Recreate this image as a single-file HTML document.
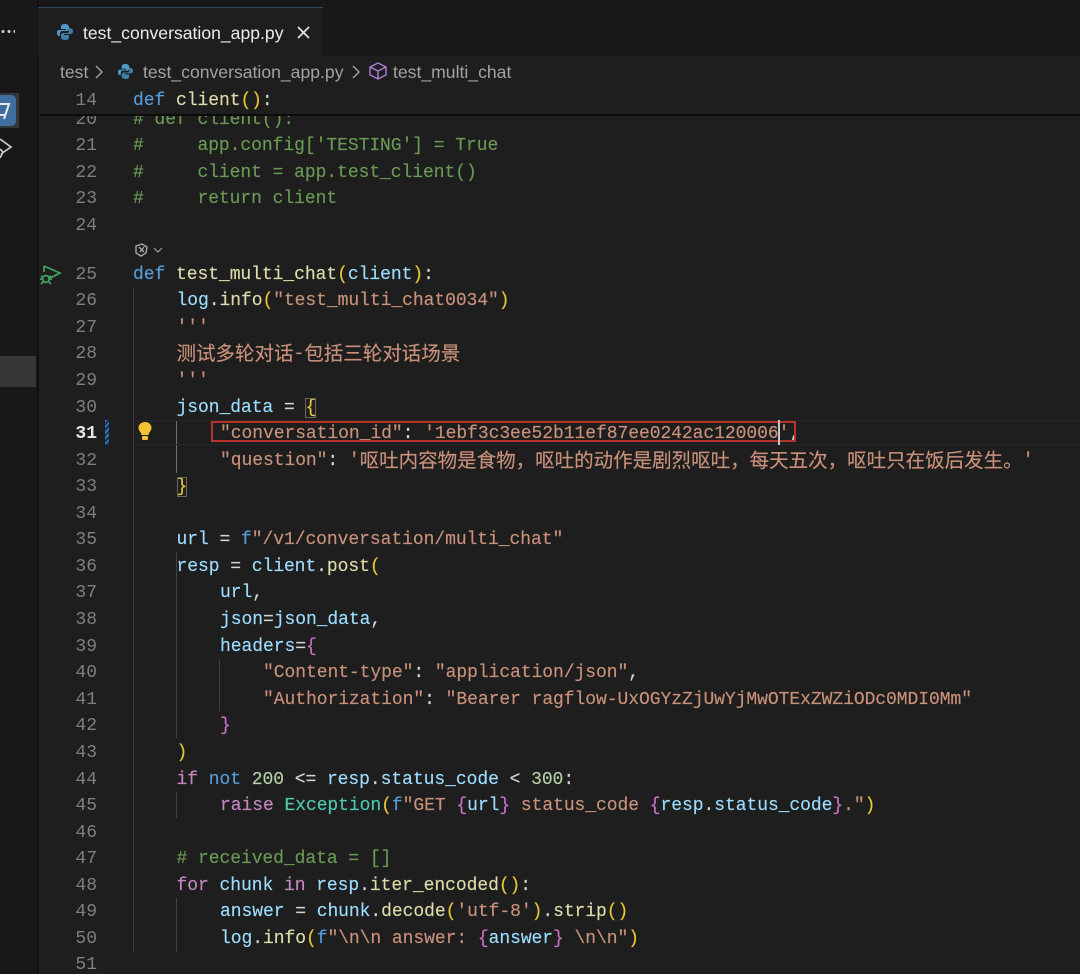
<!DOCTYPE html>
<html><head><meta charset="utf-8">
<style>
html,body{margin:0;padding:0;background:#1e1e1e}
#p{position:relative;width:1080px;height:974px;overflow:hidden;background:#1e1e1e;filter:blur(.35px)}
.a{position:absolute}
.l{position:absolute;margin-top:1px;white-space:pre;font:18px/26px "Liberation Mono","Noto Sans CJK SC",monospace;letter-spacing:-.06px;color:#d4d4d4;-webkit-text-stroke:.15px}
.n{position:absolute;margin-top:1px;width:39px;left:58px;text-align:right;font:18px/26px "Liberation Mono",monospace;color:#7f7f7f}
.u{font:17.6px/26px "Liberation Sans","Noto Sans CJK SC",sans-serif}
.c{font-family:"Noto Sans CJK SC",sans-serif;font-size:19.5px;line-height:0;letter-spacing:0;position:relative;top:1.5px}
.k{color:#569cd6}.f{color:#dcdcaa}.v{color:#9cdcfe}.s{color:#c9917a}.g{color:#6a9955}.y{color:#e6c635}.m{color:#c971c6}.p{color:#c586c0}.b{color:#b5cea8}.t{color:#4ec9b0}.w{color:#d4d4d4}
.i{position:absolute;width:1px;background:#404040}
</style></head><body>
<div id="p">
<div class="a" style="left:0;top:0;width:1080px;height:8px;background:#181818"></div>
<div class="a" style="left:0;top:0;width:37px;height:974px;background:#181818"></div>
<div class="a" style="left:37px;top:0;width:2px;height:974px;background:#111"></div>
<div class="a" style="left:39px;top:8px;width:1041px;height:48px;background:#181818"></div>
<div class="a" style="left:38px;top:7px;width:285px;height:49px;background:#1e1e1e;border-top:1px solid #2c4a63;box-sizing:border-box"></div>
<div class="a" style="left:0;top:356px;width:36px;height:31px;background:#37373a"></div>
<div class="a" style="left:0;top:93px;width:19px;height:35px;background:#33373c"></div>
<div class="a" style="left:0;top:95px;width:16px;height:31px;background:#3f6d9e;border-radius:0 5px 5px 0"></div>
<svg class="a" style="left:0;top:95px" width="16" height="30" fill="none" stroke="#e8e8e8" stroke-width="2"><path d="M0 9H9L4 24M0 20H5"/></svg>
<svg class="a" style="left:0;top:136px" width="14" height="24" fill="none" stroke="#cfcfcf" stroke-width="1.6"><path d="M0 3L11 11L1 18M0 13L3 16L0 22"/></svg>
<div class="a" style="left:0;top:30px;width:15px;height:3px;background:radial-gradient(circle,#ccc 1.4px,transparent 1.6px) 0 0/6px 3px"></div>
<svg class="a" style="left:57px;top:24px" width="16" height="16" viewBox="0 0 16 16"><path fill="#4d9ac9" d="M8 0C5 0 4 1 4 3V5H9V6H2C0 6 0 8 0 9C0 11 1 12 3 12V9C3 8 4 7 5 7H10C11 7 12 6 12 5V3C12 1 10 0 8 0Z"/><path fill="#3c7fa8" d="M12 4V7C12 8 11 9 10 9H6C5 9 4 10 4 11V13C4 15 6 16 8 16C11 16 12 15 12 13V11H7V10H13C15 10 16 9 16 7C16 5 14 4 12 4Z"/></svg>
<div class="a u" style="left:83px;top:20px;color:#ececec">test_conversation_app.py</div>
<svg class="a" style="left:296px;top:25px" width="15" height="15" fill="none" stroke="#e8e8e8" stroke-width="1.6"><path d="M2 2L13 13M13 2L2 13"/></svg>
<div class="a u" style="left:60px;top:59px;color:#a3a3a3">test</div>
<svg class="a" style="left:94px;top:65px" width="10" height="15" fill="none" stroke="#a3a3a3" stroke-width="1.4"><path d="M2 1L8 7L2 13"/></svg>
<svg class="a" style="left:118px;top:64px" width="15" height="15" viewBox="0 0 16 16"><path fill="#4d9ac9" d="M8 0C5 0 4 1 4 3V5H9V6H2C0 6 0 8 0 9C0 11 1 12 3 12V9C3 8 4 7 5 7H10C11 7 12 6 12 5V3C12 1 10 0 8 0Z"/><path fill="#3c7fa8" d="M12 4V7C12 8 11 9 10 9H6C5 9 4 10 4 11V13C4 15 6 16 8 16C11 16 12 15 12 13V11H7V10H13C15 10 16 9 16 7C16 5 14 4 12 4Z"/></svg>
<div class="a u" style="left:143px;top:59px;color:#a3a3a3">test_conversation_app.py</div>
<svg class="a" style="left:351px;top:65px" width="10" height="15" fill="none" stroke="#a3a3a3" stroke-width="1.4"><path d="M2 1L8 7L2 13"/></svg>
<svg class="a" style="left:369px;top:61px" width="18" height="20" fill="none" stroke="#b180d7" stroke-width="1.4"><path d="M9 2L17 6V14L9 18L1 14V6ZM1 6L9 10L17 6M9 10V18"/></svg>
<div class="a u" style="left:393px;top:59px;color:#a3a3a3">test_multi_chat</div>

<div class="l" style="left:133px;top:106px"><span class="g"># def client():</span></div>
<div class="n" style="top:106px">20</div>
<div class="a" style="left:39px;top:86px;width:1041px;height:28px;background:#1e1e1e"></div>
<div class="a" style="left:40px;top:114px;width:1040px;height:2px;background:#0a0a0a"></div>
<div class="n" style="top:87px">14</div>
<div class="l" style="left:133px;top:87px"><span class="k">def</span> <span class="f">client</span><span class="y">()</span><span class="w">:</span></div>

<div class="i" style="left:133px;top:288px;height:664px"></div>
<div class="i" style="left:176px;top:420px;height:53px;background:#707070"></div>
<div class="i" style="left:176px;top:552px;height:186px"></div>
<div class="i" style="left:176px;top:792px;height:26px"></div>
<div class="i" style="left:176px;top:898px;height:54px"></div>
<div class="i" style="left:219px;top:659px;height:52px"></div>
<div class="a" style="left:133px;top:420px;width:947px;height:25px;box-sizing:border-box;border-top:1px solid #262626;border-bottom:1px solid #262626"></div>

<div class="n" style="top:132px">21</div><div class="l" style="left:133px;top:132px"><span class="g">#     app.config['TESTING'] = True</span></div>
<div class="n" style="top:159px">22</div><div class="l" style="left:133px;top:159px"><span class="g">#     client = app.test_client()</span></div>
<div class="n" style="top:185px">23</div><div class="l" style="left:133px;top:185px"><span class="g">#     return client</span></div>
<div class="n" style="top:212px">24</div>
<svg class="a" style="left:134px;top:242px" width="32" height="16" fill="none" stroke="#a8a8a8" stroke-width="1.4"><path d="M2 4L8 2L13 5L12 11L7 14L2 11ZM5 5L10 10M10 5L6 10"/><path d="M20 6L24 10L28 6" stroke-width="1.1"/></svg>

<svg class="a" style="left:39px;top:264px" width="24" height="22" fill="none" stroke="#3fa266" stroke-width="1.7"><path d="M5 2L21 9L9 15M5 2V8"/><circle cx="7" cy="15" r="3.4"/><path d="M2 12L4 13M12 12L10 13M1 15H4M13 15H10M2 20L4 18M12 20L10 18"/></svg>
<div class="n" style="top:261px">25</div><div class="l" style="left:133px;top:261px"><span class="k">def</span> <span class="f">test_multi_chat</span><span class="y">(</span><span class="v">client</span><span class="y">)</span><span class="w">:</span></div>
<div class="n" style="top:287px">26</div><div class="l" style="left:176.5px;top:287px"><span class="v">log</span><span class="w">.</span><span class="f">info</span><span class="y">(</span><span class="s">"test_multi_chat0034"</span><span class="y">)</span></div>
<div class="n" style="top:314px">27</div><div class="l" style="left:176.5px;top:314px"><span class="s">'''</span></div>
<div class="n" style="top:340px">28</div><div class="l" style="left:176.5px;top:340px"><span class="s c">测试多轮对话</span><span class="s">-</span><span class="s c">包括三轮对话场景</span></div>
<div class="n" style="top:367px">29</div><div class="l" style="left:176.5px;top:367px"><span class="s">'''</span></div>
<div class="n" style="top:394px">30</div><div class="l" style="left:176.5px;top:394px"><span class="v">json_data</span> <span class="w">=</span> <span class="y" style="outline:1px solid #6a6a5a;outline-offset:-1px">{</span></div>
<div class="n" style="top:420px;color:#e6e6e6;font-weight:bold">31</div>
<div class="a" style="left:105px;top:420px;width:4px;height:25px;background:repeating-linear-gradient(135deg,#2f74c0 0 2px,#16304f 2px 4px)"></div>
<svg class="a" style="left:137px;top:421px" width="16" height="20"><path fill="#f2c230" d="M8 1C4 1 1.500 3.500 1.500 7C1.500 9.500 4 11 4.500 14H11.500C12 11 14.500 9.500 14.500 7C14.500 3.500 12 1 8 1Z"/><rect x="5" y="15" width="6" height="4" rx="1" fill="#f2c230"/></svg>
<div class="l" style="left:220px;top:420px"><span class="s">"conversation_id"</span><span class="w">:</span> <span class="s">'1ebf3c3ee52b11ef87ee0242ac120006'</span><span class="w">,</span></div>
<div class="a" style="left:211px;top:421px;width:581px;height:17px;border:2px solid #b7302a;box-sizing:content-box"></div>
<div class="a" style="left:778px;top:420px;width:2px;height:25px;background:#c8c8c8"></div>
<div class="n" style="top:447px">32</div><div class="l" style="left:220px;top:447px"><span class="s">"question"</span><span class="w">:</span> <span class="s">'</span><span class="s c">呕吐内容物是食物，呕吐的动作是剧烈呕吐，每天五次，呕吐只在饭后发生。</span><span class="s">'</span></div>
<div class="n" style="top:473px">33</div><div class="l" style="left:176.5px;top:473px"><span class="y" style="outline:1px solid #6a6a5a;outline-offset:-1px">}</span></div>
<div class="n" style="top:500px">34</div>
<div class="n" style="top:526px">35</div><div class="l" style="left:176.5px;top:526px"><span class="v">url</span> <span class="w">=</span> <span class="k">f</span><span class="s">"/v1/conversation/multi_chat"</span></div>
<div class="n" style="top:553px">36</div><div class="l" style="left:176.5px;top:553px"><span class="v">resp</span> <span class="w">=</span> <span class="v">client</span><span class="w">.</span><span class="f">post</span><span class="y">(</span></div>
<div class="n" style="top:579px">37</div><div class="l" style="left:220px;top:579px"><span class="v">url</span><span class="w">,</span></div>
<div class="n" style="top:606px">38</div><div class="l" style="left:220px;top:606px"><span class="v">json</span><span class="w">=</span><span class="v">json_data</span><span class="w">,</span></div>
<div class="n" style="top:633px">39</div><div class="l" style="left:220px;top:633px"><span class="v">headers</span><span class="w">=</span><span class="m">{</span></div>
<div class="n" style="top:659px">40</div><div class="l" style="left:263px;top:659px"><span class="s">"Content-type"</span><span class="w">:</span> <span class="s">"application/json"</span><span class="w">,</span></div>
<div class="n" style="top:686px">41</div><div class="l" style="left:263px;top:686px"><span class="s">"Authorization"</span><span class="w">:</span> <span class="s">"Bearer ragflow-UxOGYzZjUwYjMwOTExZWZiODc0MDI0Mm"</span></div>
<div class="n" style="top:712px">42</div><div class="l" style="left:220px;top:712px"><span class="m">}</span></div>
<div class="n" style="top:739px">43</div><div class="l" style="left:176.5px;top:739px"><span class="y">)</span></div>
<div class="n" style="top:766px">44</div><div class="l" style="left:176.5px;top:766px"><span class="p">if</span> <span class="k">not</span> <span class="b">200</span> <span class="w">&lt;=</span> <span class="v">resp</span><span class="w">.</span><span class="v">status_code</span> <span class="w">&lt;</span> <span class="b">300</span><span class="w">:</span></div>
<div class="n" style="top:792px">45</div><div class="l" style="left:220px;top:792px"><span class="p">raise</span> <span class="t">Exception</span><span class="y">(</span><span class="k">f</span><span class="s">"GET </span><span class="m">{</span><span class="v">url</span><span class="m">}</span><span class="s"> status_code </span><span class="m">{</span><span class="v">resp</span><span class="w">.</span><span class="v">status_code</span><span class="m">}</span><span class="s">."</span><span class="y">)</span></div>
<div class="n" style="top:819px">46</div>
<div class="n" style="top:845px">47</div><div class="l" style="left:176.5px;top:845px"><span class="g"># received_data = []</span></div>
<div class="n" style="top:872px">48</div><div class="l" style="left:176.5px;top:872px"><span class="p">for</span> <span class="v">chunk</span> <span class="p">in</span> <span class="v">resp</span><span class="w">.</span><span class="f">iter_encoded</span><span class="y">()</span><span class="w">:</span></div>
<div class="n" style="top:898px">49</div><div class="l" style="left:220px;top:898px"><span class="v">answer</span> <span class="w">=</span> <span class="v">chunk</span><span class="w">.</span><span class="f">decode</span><span class="y">(</span><span class="s">'utf-8'</span><span class="y">)</span><span class="w">.</span><span class="f">strip</span><span class="y">()</span></div>
<div class="n" style="top:925px">50</div><div class="l" style="left:220px;top:925px"><span class="v">log</span><span class="w">.</span><span class="f">info</span><span class="y">(</span><span class="k">f</span><span class="s">"\n\n answer: </span><span class="m">{</span><span class="v">answer</span><span class="m">}</span><span class="s"> \n\n"</span><span class="y">)</span></div>
<div class="n" style="top:951px">51</div>
</div>
</body></html>
